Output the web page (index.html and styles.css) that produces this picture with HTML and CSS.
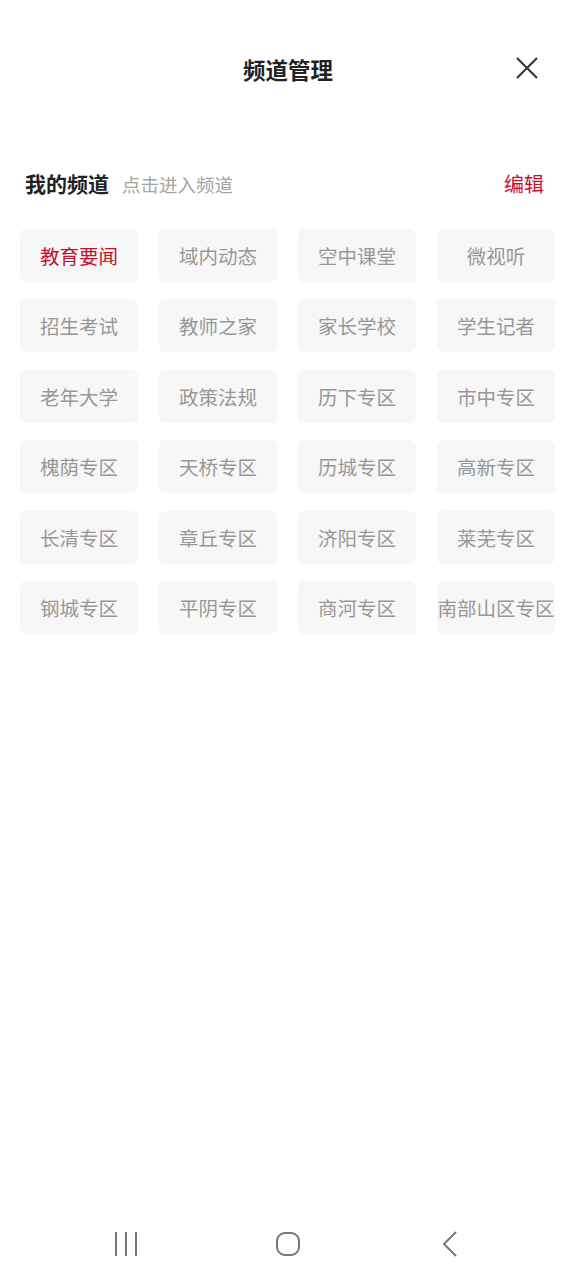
FILE: index.html
```html
<!DOCTYPE html>
<html lang="zh-CN">
<head>
  <meta charset="UTF-8" />
  <title>频道管理</title>
  <link rel="stylesheet" href="styles.css">
</head>
<body>
  <div class="page">
    <header class="header">
      <h1>频道管理</h1>
      <button class="close-btn" aria-label="关闭">
        <svg width="22" height="22" viewBox="0 0 22 22">
          <path d="M1 1 L21 21 M21 1 L1 21" stroke="#333" stroke-width="2" fill="none" />
        </svg>
      </button>
    </header>

    <div class="section-head">
      <span class="section-title">我的频道</span>
      <span class="section-hint">点击进入频道</span>
      <a class="edit-link" href="#">编辑</a>
    </div>

    <div class="channel-grid">
      <div class="channel active">教育要闻</div>
      <div class="channel">域内动态</div>
      <div class="channel">空中课堂</div>
      <div class="channel">微视听</div>
      <div class="channel">招生考试</div>
      <div class="channel">教师之家</div>
      <div class="channel">家长学校</div>
      <div class="channel">学生记者</div>
      <div class="channel">老年大学</div>
      <div class="channel">政策法规</div>
      <div class="channel">历下专区</div>
      <div class="channel">市中专区</div>
      <div class="channel">槐荫专区</div>
      <div class="channel">天桥专区</div>
      <div class="channel">历城专区</div>
      <div class="channel">高新专区</div>
      <div class="channel">长清专区</div>
      <div class="channel">章丘专区</div>
      <div class="channel">济阳专区</div>
      <div class="channel">莱芜专区</div>
      <div class="channel">钢城专区</div>
      <div class="channel">平阴专区</div>
      <div class="channel">商河专区</div>
      <div class="channel">南部山区专区</div>
    </div>
  </div>

  <nav class="nav-bar">
    <svg width="26" height="24" viewBox="0 0 26 24">
      <path d="M3 0 V24 M13 0 V24 M23 0 V24" stroke="#777" stroke-width="2" fill="none" />
    </svg>
    <svg width="26" height="26" viewBox="0 0 26 26">
      <rect x="2" y="2" width="22" height="22" rx="8" stroke="#777" stroke-width="2" fill="none" />
    </svg>
    <svg width="21" height="26" viewBox="0 0 21 26">
      <path d="M19 1 L7 13 L19 25" stroke="#777" stroke-width="2" fill="none" />
    </svg>
  </nav>
</body>
</html>
```

FILE: styles.css
```css
* {
  box-sizing: border-box;
}

body {
  margin: 0;
  width: 576px;
  height: 1280px;
  background: #fff;
  font-family: "Noto Sans CJK SC", "Noto Sans", sans-serif;
  position: relative;
  overflow: hidden;
}

.page {
  padding: 0 20px;
}

.header {
  height: 140px;
  padding-top: 49px;
  position: relative;
  text-align: center;
}

.header h1 {
  margin: 0;
  font-size: 22.5px;
  line-height: 40px;
  font-weight: 700;
  color: #222;
}

.close-btn {
  position: absolute;
  top: 57px;
  right: 18px;
  padding: 0;
  border: none;
  background: none;
  line-height: 0;
}

.section-head {
  display: flex;
  align-items: baseline;
  padding: 0 12px 0 5px;
  height: 89px;
  padding-top: 28px;
}

.section-title {
  font-size: 21px;
  font-weight: 700;
  color: #222;
}

.section-hint {
  margin-left: 13px;
  font-size: 18.5px;
  color: #a3a3a3;
}

.edit-link {
  margin-left: auto;
  font-size: 20px;
  color: #c8102e;
  text-decoration: none;
}

.channel-grid {
  display: grid;
  grid-template-columns: repeat(4, 118px);
  column-gap: 21px;
  row-gap: 17.4px;
}

.channel {
  height: 53px;
  display: flex;
  align-items: center;
  justify-content: center;
  background: #f7f7f7;
  border-radius: 6px;
  font-size: 19.5px;
  color: #979797;
  white-space: nowrap;
}

.channel.active {
  color: #c0102b;
}

.nav-bar {
  position: absolute;
  left: 0;
  right: 0;
  bottom: 21px;
  height: 30px;
  display: flex;
  align-items: center;
  justify-content: space-between;
  padding: 0 118px 0 113px;
}
```
